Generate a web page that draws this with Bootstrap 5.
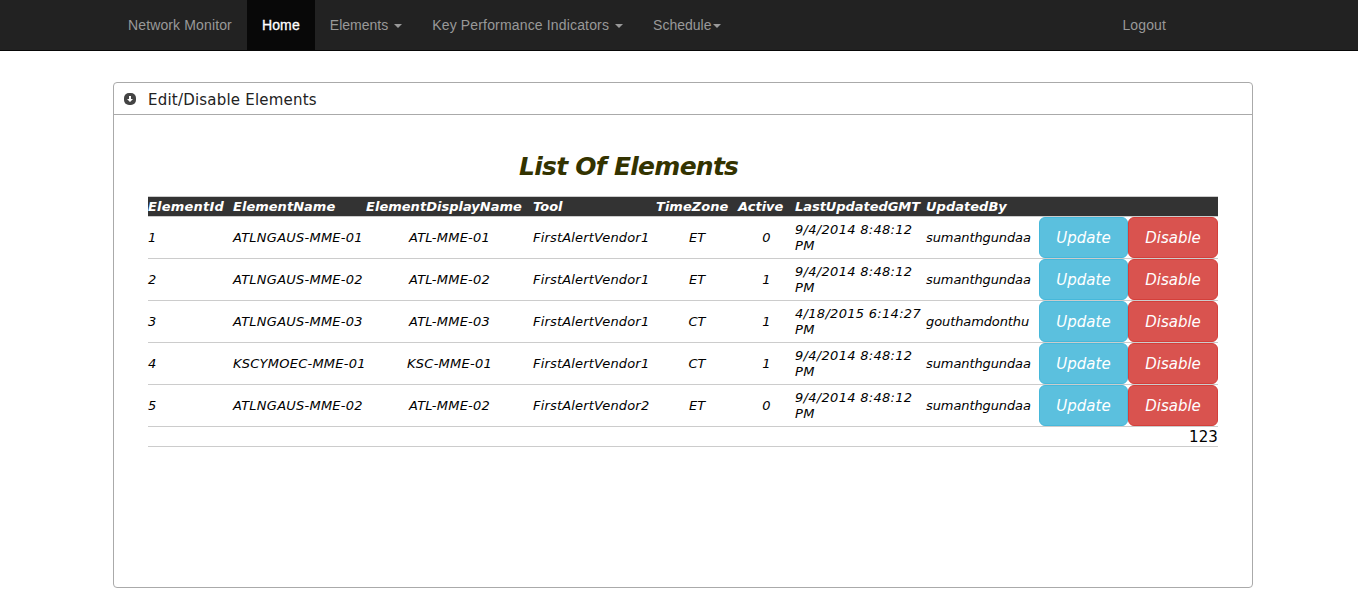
<!DOCTYPE html>
<html lang="en">
<head>
<meta charset="utf-8">
<meta name="viewport" content="width=device-width, initial-scale=1">
<title>Network Monitor</title>
<link href="https://cdn.jsdelivr.net/npm/bootstrap@5.3.0/dist/css/bootstrap.min.css" rel="stylesheet">
<style>
body{font-family:Verdana,"DejaVu Sans",sans-serif;font-size:15px;color:#000;background:#fff;overflow:hidden}
.topbar{height:51px;background:#222;border-bottom:1px solid #080808;font:14px/20px "Liberation Sans",Arial,sans-serif}
.page-width{width:1140px;margin-left:113px}
.topbar .nav-link{color:#999;padding:15px;height:50px;white-space:nowrap}
.topbar .nav-link.active{color:#fff;background:#080808;-webkit-text-stroke:.3px #fff;letter-spacing:.15px}
.topbar .site-name{letter-spacing:.13px}
.topbar .indicators{letter-spacing:.16px}
.topbar .logout{margin-right:72px;letter-spacing:.12px}
.topbar .dropdown-toggle::after{border-top:4px solid;border-left:4px solid transparent;border-right:4px solid transparent;margin-left:6px;vertical-align:2px}
.topbar .tight::after{margin-left:2px}
.panel{margin-top:31px;height:506px;border:1px solid #aaa;border-radius:4px}
.panel-head{height:32px;border-bottom:1px solid #aaa;padding:0 10px;color:#222;gap:12px}
.panel-head span{letter-spacing:.21px;line-height:30px;padding-top:2px}
.list-title{font-size:25px;line-height:30px;font-weight:bold;font-style:italic;color:#330;margin:37px 0 0 405px;letter-spacing:-.74px;white-space:nowrap}
.elements{width:1070px;margin:14px 0 0 34px;table-layout:fixed;border-collapse:separate;border-spacing:0;font-size:13px;line-height:16px;font-style:italic}
.elements td,.elements th{padding:0;border-bottom:1px solid #ccc;vertical-align:middle;white-space:nowrap}
.elements th{background:#333;color:#fff;height:21px;border-top:1px solid #ccc;font-weight:bold;letter-spacing:.02px}
.elements th:first-child{letter-spacing:.2px}
.elements th:nth-child(7){letter-spacing:-.05px}
.elements tbody td{height:42px}
.elements tbody td:nth-child(2),.elements tbody td:nth-child(3){letter-spacing:.24px}
.elements tbody td:nth-child(4){letter-spacing:.17px}
.elements tbody td:nth-child(7){letter-spacing:.3px}
.elements tbody td:nth-child(8){letter-spacing:-.1px}
.elements tfoot td{height:20px;font-size:15px;font-style:normal;line-height:17px;padding-top:2px;letter-spacing:.1px}
.elements .btn{display:block;width:100%;height:41px;padding:1px 0 0;line-height:39px;font-size:15px;font-style:italic;border-radius:6px;color:#fff}
.btn-update{background:#5bc0de;border-color:#46b8da}
.btn-disable{background:#d9534f;border-color:#d43f3a}
</style>
</head>
<body>
<nav class="topbar">
<div class="page-width d-flex">
<a class="nav-link site-name" href="#">Network Monitor</a>
<a class="nav-link active" href="#">Home</a>
<a class="nav-link dropdown-toggle" href="#">Elements</a>
<a class="nav-link dropdown-toggle indicators" href="#">Key Performance Indicators</a>
<a class="nav-link dropdown-toggle tight" href="#">Schedule</a>
<a class="nav-link ms-auto logout" href="#">Logout</a>
</div>
</nav>
<main class="page-width panel">
<div class="panel-head d-flex align-items-center">
<svg width="12" height="12" viewBox="0 0 12 12"><rect width="12" height="12" rx="5" fill="#444"/><path d="M5 3h2v3h2L6 9 3 6h2z" fill="#fff"/></svg>
<span>Edit/Disable Elements</span>
</div>
<h1 class="list-title">List Of Elements</h1>
<table class="elements">
<colgroup><col style="width:85px"><col style="width:133px"><col style="width:167px"><col style="width:123px"><col style="width:82px"><col style="width:57px"><col style="width:131px"><col style="width:113px"><col style="width:89px"><col style="width:90px"></colgroup>
<thead><tr><th>ElementId</th><th>ElementName</th><th>ElementDisplayName</th><th>Tool</th><th>TimeZone</th><th>Active</th><th>LastUpdatedGMT</th><th>UpdatedBy</th><th></th><th></th></tr></thead>
<tbody>
<tr><td>1</td><td>ATLNGAUS-MME-01</td><td class="text-center">ATL-MME-01</td><td>FirstAlertVendor1</td><td class="text-center">ET</td><td class="text-center">0</td><td>9/4/2014 8:48:12<br>PM</td><td>sumanthgundaa</td><td><button class="btn btn-update">Update</button></td><td><button class="btn btn-disable">Disable</button></td></tr>
<tr><td>2</td><td>ATLNGAUS-MME-02</td><td class="text-center">ATL-MME-02</td><td>FirstAlertVendor1</td><td class="text-center">ET</td><td class="text-center">1</td><td>9/4/2014 8:48:12<br>PM</td><td>sumanthgundaa</td><td><button class="btn btn-update">Update</button></td><td><button class="btn btn-disable">Disable</button></td></tr>
<tr><td>3</td><td>ATLNGAUS-MME-03</td><td class="text-center">ATL-MME-03</td><td>FirstAlertVendor1</td><td class="text-center">CT</td><td class="text-center">1</td><td>4/18/2015 6:14:27<br>PM</td><td>gouthamdonthu</td><td><button class="btn btn-update">Update</button></td><td><button class="btn btn-disable">Disable</button></td></tr>
<tr><td>4</td><td>KSCYMOEC-MME-01</td><td class="text-center">KSC-MME-01</td><td>FirstAlertVendor1</td><td class="text-center">CT</td><td class="text-center">1</td><td>9/4/2014 8:48:12<br>PM</td><td>sumanthgundaa</td><td><button class="btn btn-update">Update</button></td><td><button class="btn btn-disable">Disable</button></td></tr>
<tr><td>5</td><td>ATLNGAUS-MME-02</td><td class="text-center">ATL-MME-02</td><td>FirstAlertVendor2</td><td class="text-center">ET</td><td class="text-center">0</td><td>9/4/2014 8:48:12<br>PM</td><td>sumanthgundaa</td><td><button class="btn btn-update">Update</button></td><td><button class="btn btn-disable">Disable</button></td></tr>
</tbody>
<tfoot><tr><td colspan="10" class="text-end">123</td></tr></tfoot>
</table>
</main>
<script src="https://cdn.jsdelivr.net/npm/bootstrap@5.3.0/dist/js/bootstrap.bundle.min.js"></script>
</body>
</html>
